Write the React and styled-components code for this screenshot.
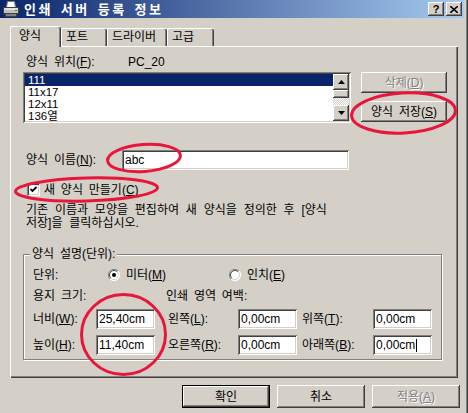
import styled, { createGlobalStyle } from 'styled-components'

const GlobalStyle = createGlobalStyle`
  html, body {
    margin: 0;
    padding: 0;
    background: #d4d0c8;
  }
  body {
    font-family: "Liberation Sans", "Noto Sans CJK KR", sans-serif;
    font-size: 12px;
    word-spacing: 2.5px;
    color: #000;
  }
`

const raised = `
  box-shadow: inset -1px -1px 0 #404040, inset 1px 1px 0 #fff,
    inset -2px -2px 0 #808080, inset 2px 2px 0 #d4d0c8;
`

const sunken = `
  box-shadow: inset 1px 1px 0 #808080, inset -1px -1px 0 #fff,
    inset 2px 2px 0 #404040, inset -2px -2px 0 #d4d0c8;
`

const Window = styled.div`
  position: relative;
  width: 468px;
  height: 413px;
  box-sizing: border-box;
  background: #d4d0c8;
  border-right: 1px solid #404040;
  box-shadow: inset -1px 0 0 #808080;
  overflow: hidden;
`

const TitleBar = styled.div`
  width: 464px;
  height: 18px;
  box-sizing: border-box;
  padding: 0 2px 0 3px;
  display: flex;
  align-items: center;
  background: linear-gradient(to right, #0a246a, #a6caf0);
  color: #fff;
`

const TitleText = styled.span`
  margin-left: 5px;
  font-family: "Noto Sans CJK KR", sans-serif;
  font-weight: bold;
  font-size: 13px;
  letter-spacing: 2.5px;
  line-height: 18px;
`

const TitleButtons = styled.div`
  margin-left: auto;
  display: flex;
  gap: 2px;
`

const CaptionButton = styled.div`
  width: 16px;
  height: 14px;
  box-sizing: border-box;
  background: #d4d0c8;
  ${raised}
  display: flex;
  align-items: center;
  justify-content: center;
  color: #000;
  font-weight: bold;
  font-size: 11px;
  line-height: 14px;
`

const Body = styled.div`
  padding: 8px 0 0 10px;
`

const TabStrip = styled.div`
  display: flex;
  align-items: flex-end;
  height: 20px;
  position: relative;
  z-index: 1;
`

const Tab = styled.div`
  width: ${p => p.$w}px;
  height: ${p => (p.$active ? 21 : 18)}px;
  margin-bottom: ${p => (p.$active ? -1 : 0)}px;
  box-sizing: border-box;
  background: #d4d0c8;
  border-top: 1px solid #fff;
  border-left: 1px solid #fff;
  border-top-left-radius: 2px;
  border-top-right-radius: 2px;
  box-shadow: inset -1px 0 0 #404040, inset -2px 0 0 #808080;
  padding: ${p => (p.$active ? '2px 0 0 8px' : '1px 0 0 4px')};
  line-height: 14px;
  white-space: nowrap;
`

const Panel = styled.div`
  width: 448px;
  height: 332px;
  box-sizing: border-box;
  padding: 9px 0 0 13px;
  display: flex;
  flex-direction: column;
  box-shadow: inset 1px 1px 0 #fff, inset -1px -1px 0 #404040,
    inset -2px -2px 0 #808080;
`

const LocationRow = styled.div`
  display: flex;
  height: 14px;
  line-height: 14px;
  padding-left: 3px;
`

const FieldLabel = styled.span`
  display: inline-block;
  width: ${p => (p.$w ? `${p.$w}px` : 'auto')};
  padding-left: ${p => p.$pad || 0}px;
  line-height: 14px;
  white-space: nowrap;
`

const ListArea = styled.div`
  display: flex;
  margin-top: 3px;
`

const ListBox = styled.div`
  width: 328px;
  height: 51px;
  box-sizing: border-box;
  padding: 2px;
  background: #fff;
  ${sunken}
  display: flex;
`

const Items = styled.div`
  flex: 1;
  display: flex;
  flex-direction: column;
  overflow: hidden;
`

const Item = styled.div`
  flex: none;
  height: 12px;
  line-height: 12px;
  font-size: 11.5px;
  padding-left: 3px;
  overflow: hidden;
  background: ${p => (p.$selected ? '#0a246a' : 'transparent')};
  color: ${p => (p.$selected ? '#fff' : '#000')};
`

const ScrollBar = styled.div`
  width: 16px;
  display: flex;
  flex-direction: column;
`

const ScrollButton = styled.div`
  width: 16px;
  height: 16px;
  box-sizing: border-box;
  background: #d4d0c8;
  ${raised}
  display: flex;
  align-items: center;
  justify-content: center;
`

const Thumb = styled.div`
  height: 8px;
  background: #d4d0c8;
  ${raised}
`

const Track = styled.div`
  flex: 1;
  background: repeating-conic-gradient(#fff 0 25%, #d4d0c8 0 50%) 0 0 / 2px 2px;
`

const SideButtons = styled.div`
  margin-left: 10px;
  display: flex;
  flex-direction: column;
  gap: 8px;
`

const Button = styled.div`
  width: ${p => p.$w}px;
  height: ${p => p.$h}px;
  box-sizing: border-box;
  background: #d4d0c8;
  display: flex;
  align-items: center;
  justify-content: center;
  line-height: 14px;
  white-space: nowrap;
  color: ${p => (p.$disabled ? '#808080' : '#000')};
  text-shadow: ${p => (p.$disabled ? '1px 1px 0 #fff' : 'none')};
  box-shadow: ${p =>
    p.$default
      ? 'inset 0 0 0 1px #000, inset -2px -2px 0 #404040, inset 2px 2px 0 #fff, inset -3px -3px 0 #808080'
      : 'inset -1px -1px 0 #404040, inset 1px 1px 0 #fff, inset -2px -2px 0 #808080, inset 2px 2px 0 #d4d0c8'};
`

const NameRow = styled.div`
  display: flex;
  align-items: center;
  margin-top: 27px;
  padding-left: 3px;
`

const TextBox = styled.div`
  width: ${p => p.$w}px;
  height: ${p => p.$h || 20}px;
  box-sizing: border-box;
  padding: 0 3px;
  background: #fff;
  ${sunken}
  display: flex;
  align-items: center;
  line-height: 14px;
  white-space: nowrap;
  word-spacing: 0;
`

const Caret = styled.span`
  display: inline-block;
  width: 1px;
  height: 13px;
  background: #000;
  margin-left: 1px;
`

const CheckRow = styled.div`
  display: flex;
  align-items: center;
  height: 13px;
  margin-top: 13px;
  padding-left: 4px;
  gap: 4px;
  line-height: 14px;
`

const Description = styled.p`
  margin: 8px 0 0;
  padding-left: 3px;
  line-height: 13px;
  word-spacing: 3.5px;
`

const GroupBox = styled.div`
  position: relative;
  width: 419px;
  height: 106px;
  margin-top: 24px;
  box-sizing: border-box;
  padding: 13px 0 0 9px;
  border: 1px solid #808080;
  box-shadow: inset 1px 1px 0 #fff, 1px 1px 0 #fff;
`

const GroupTitle = styled.span`
  position: absolute;
  top: -8px;
  left: 6px;
  padding: 0 2px;
  background: #d4d0c8;
  line-height: 14px;
`

const UnitsRow = styled.div`
  display: flex;
  align-items: center;
  height: 14px;
`

const RadioOption = styled.div`
  display: flex;
  align-items: center;
  gap: 6px;
  width: ${p => p.$w}px;
  line-height: 14px;
`

const PaperRow = styled.div`
  display: flex;
  height: 14px;
  margin-top: 7px;
`

const SizeGrid = styled.div`
  display: grid;
  grid-template-columns: 63px 59px 83px 59px 76px 59px;
  grid-auto-rows: 20px;
  row-gap: 6px;
  align-items: center;
  margin-top: 6px;
`

const ButtonRow = styled.div`
  width: 450px;
  display: flex;
  justify-content: flex-end;
  gap: 7px;
  margin-top: 7px;
`

const Annotations = styled.svg`
  position: absolute;
  left: 0;
  top: 0;
  pointer-events: none;
`

const PrinterIcon = () => (
  <svg width="16" height="16" viewBox="0 0 16 16">
    <path d="M4.5 0.5 L11.5 0.5 L12.5 6.5 L3.5 6.5 Z" fill="#fff" stroke="#808080" />
    <rect x="0.5" y="6.5" width="15" height="6" fill="#c0c0c0" stroke="#404040" />
    <rect x="1.5" y="7.5" width="13" height="1" fill="#fff" />
    <rect x="2.5" y="12.5" width="11" height="3" fill="#808080" stroke="#404040" />
    <rect x="12" y="9" width="2" height="1" fill="#00a000" />
  </svg>
)

const Arrow = ({ down }) => (
  <svg width="7" height="4" viewBox="0 0 7 4">
    <path d={down ? 'M0 0 H7 L3.5 4 Z' : 'M0 4 H7 L3.5 0 Z'} fill="#000" />
  </svg>
)

const CloseGlyph = () => (
  <svg width="8" height="7" viewBox="0 0 8 7">
    <path d="M0 0 L8 7 M8 0 L0 7" stroke="#000" strokeWidth="1.6" />
  </svg>
)

const CheckBox = () => (
  <svg width="13" height="13" viewBox="0 0 13 13">
    <rect x="0" y="0" width="13" height="13" fill="#808080" />
    <rect x="1" y="1" width="12" height="12" fill="#fff" />
    <rect x="1" y="1" width="11" height="11" fill="#404040" />
    <rect x="2" y="2" width="10" height="10" fill="#d4d0c8" />
    <rect x="2" y="2" width="9" height="9" fill="#fff" />
    <path d="M3.5 6 L5.5 8 L9.5 4" stroke="#000" strokeWidth="1.8" fill="none" />
  </svg>
)

const Radio = ({ checked }) => (
  <svg width="12" height="12" viewBox="0 0 12 12">
    <circle cx="6" cy="6" r="5.5" fill="#fff" />
    <path d="M10 2 A5.5 5.5 0 0 0 2 10" stroke="#808080" fill="none" />
    <path d="M2 10 A5.5 5.5 0 0 0 10 2" stroke="#fff" fill="none" />
    <path d="M9.2 2.8 A4.5 4.5 0 0 0 2.8 9.2" stroke="#404040" fill="none" />
    <path d="M2.8 9.2 A4.5 4.5 0 0 0 9.2 2.8" stroke="#d4d0c8" fill="none" />
    {checked && <circle cx="6" cy="6" r="2" fill="#000" />}
  </svg>
)

const listItems = ['111', '11x17', '12x11', '136열']

export default function App() {
  return (
    <Window>
      <GlobalStyle />
      <TitleBar>
        <PrinterIcon />
        <TitleText>인쇄 서버 등록 정보</TitleText>
        <TitleButtons>
          <CaptionButton>?</CaptionButton>
          <CaptionButton>
            <CloseGlyph />
          </CaptionButton>
        </TitleButtons>
      </TitleBar>

      <Body>
        <TabStrip>
          <Tab $w={51} $active>양식</Tab>
          <Tab $w={46}>포트</Tab>
          <Tab $w={60}>드라이버</Tab>
          <Tab $w={47}>고급</Tab>
        </TabStrip>

        <Panel>
          <LocationRow>
            <FieldLabel $w={102}>
              양식 위치(<u>F</u>):
            </FieldLabel>
            <FieldLabel>PC_20</FieldLabel>
          </LocationRow>

          <ListArea>
            <ListBox>
              <Items>
                {listItems.map((it, i) => (
                  <Item key={it} $selected={i === 0}>
                    {it}
                  </Item>
                ))}
              </Items>
              <ScrollBar>
                <ScrollButton>
                  <Arrow />
                </ScrollButton>
                <Thumb />
                <Track />
                <ScrollButton>
                  <Arrow down />
                </ScrollButton>
              </ScrollBar>
            </ListBox>
            <SideButtons>
              <Button $w={86} $h={21} $disabled>
                삭제(<u>D</u>)
              </Button>
              <Button $w={86} $h={21}>
                양식 저장(<u>S</u>)
              </Button>
            </SideButtons>
          </ListArea>

          <NameRow>
            <FieldLabel $w={96}>
              양식 이름(<u>N</u>):
            </FieldLabel>
            <TextBox $w={227}>abc</TextBox>
          </NameRow>

          <CheckRow>
            <CheckBox />
            <span>
              새 양식 만들기(<u>C</u>)
            </span>
          </CheckRow>

          <Description>
            기존 이름과 모양을 편집하여 새 양식을 정의한 후 [양식
            <br />
            저장]을 클릭하십시오.
          </Description>

          <GroupBox>
            <GroupTitle>양식 설명(단위):</GroupTitle>
            <UnitsRow>
              <FieldLabel $w={75}>단위:</FieldLabel>
              <RadioOption $w={121}>
                <Radio checked />
                <span>
                  미터(<u>M</u>)
                </span>
              </RadioOption>
              <RadioOption $w={100}>
                <Radio />
                <span>
                  인치(<u>E</u>)
                </span>
              </RadioOption>
            </UnitsRow>

            <PaperRow>
              <FieldLabel $w={133}>용지 크기:</FieldLabel>
              <FieldLabel>인쇄 영역 여백:</FieldLabel>
            </PaperRow>

            <SizeGrid>
              <FieldLabel>
                너비(<u>W</u>):
              </FieldLabel>
              <TextBox $w={59}>25,40cm</TextBox>
              <FieldLabel $pad={13}>
                왼쪽(<u>L</u>):
              </FieldLabel>
              <TextBox $w={59}>0,00cm</TextBox>
              <FieldLabel $pad={5}>
                위쪽(<u>T</u>):
              </FieldLabel>
              <TextBox $w={59}>0,00cm</TextBox>

              <FieldLabel>
                높이(<u>H</u>):
              </FieldLabel>
              <TextBox $w={59}>11,40cm</TextBox>
              <FieldLabel $pad={13}>
                오른쪽(<u>R</u>):
              </FieldLabel>
              <TextBox $w={59}>0,00cm</TextBox>
              <FieldLabel $pad={5}>
                아래쪽(<u>B</u>):
              </FieldLabel>
              <TextBox $w={59}>
                0,00cm
                <Caret />
              </TextBox>
            </SizeGrid>
          </GroupBox>
        </Panel>

        <ButtonRow>
          <Button $w={88} $h={23} $default>
            확인
          </Button>
          <Button $w={88} $h={23}>
            취소
          </Button>
          <Button $w={88} $h={23} $disabled>
            적용(<u>A</u>)
          </Button>
        </ButtonRow>
      </Body>

      <Annotations width="468" height="413" viewBox="0 0 468 413">
        <g fill="none" stroke="#e8163a" strokeWidth="3">
          <ellipse cx="403.5" cy="113" rx="52" ry="20" transform="rotate(-3 403.5 113)" />
          <ellipse cx="144" cy="158" rx="36.5" ry="13.5" transform="rotate(-4 144 158)" />
          <ellipse cx="86.5" cy="189.5" rx="71" ry="11.5" transform="rotate(-1.5 86.5 189.5)" />
          <ellipse cx="123.5" cy="334.5" rx="42" ry="40" />
        </g>
      </Annotations>
    </Window>
  )
}
